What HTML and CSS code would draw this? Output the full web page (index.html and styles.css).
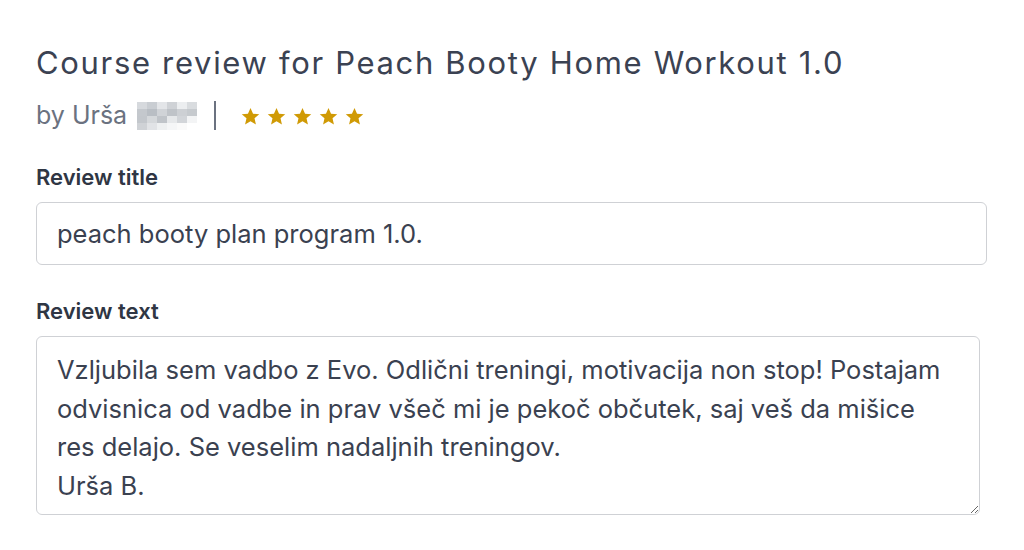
FILE: index.html
```html
<!DOCTYPE html>
<html lang="sl">
<head>
<meta charset="utf-8">
<title>Course review</title>
<link rel="stylesheet" href="styles.css">
</head>
<body>
<main class="review">
  <h1 class="review__title">Course review for Peach Booty Home Workout 1.0</h1>
  <div class="review__meta">
    <span class="review__author">by Urša</span>
    <span class="blur">
      <i style="background:#d6d9dd"></i><i style="background:#c9cdd2"></i><i style="background:#e3e5e8"></i><i style="background:#cfd2d6"></i><i style="background:#eceef0"></i><i style="background:#d9dcdf"></i>
      <i style="background:#c4c8cd"></i><i style="background:#b9bec4"></i><i style="background:#d0d3d7"></i><i style="background:#bfc3c8"></i><i style="background:#cdd0d4"></i><i style="background:#c6cace"></i>
      <i style="background:#c3c7cc"></i><i style="background:#d5d8db"></i><i style="background:#c0c4c9"></i><i style="background:#e6e8ea"></i><i style="background:#d2d5d9"></i><i style="background:#f3f4f5"></i>
      <i style="background:#cfd2d6"></i><i style="background:#e1e3e6"></i><i style="background:#eef0f1"></i><i style="background:#f5f6f7"></i><i style="background:#fafafa"></i><i style="background:#ffffff"></i>
    </span>
    <span class="divider"></span>
    <span class="stars">
      <svg viewBox="0 0 24 24"><path d="M12 2.2l2.9 6.6 7.1.6-5.4 4.7 1.6 7-6.2-3.7-6.2 3.7 1.6-7L2 9.4l7.1-.6z"/></svg>
      <svg viewBox="0 0 24 24"><path d="M12 2.2l2.9 6.6 7.1.6-5.4 4.7 1.6 7-6.2-3.7-6.2 3.7 1.6-7L2 9.4l7.1-.6z"/></svg>
      <svg viewBox="0 0 24 24"><path d="M12 2.2l2.9 6.6 7.1.6-5.4 4.7 1.6 7-6.2-3.7-6.2 3.7 1.6-7L2 9.4l7.1-.6z"/></svg>
      <svg viewBox="0 0 24 24"><path d="M12 2.2l2.9 6.6 7.1.6-5.4 4.7 1.6 7-6.2-3.7-6.2 3.7 1.6-7L2 9.4l7.1-.6z"/></svg>
      <svg viewBox="0 0 24 24"><path d="M12 2.2l2.9 6.6 7.1.6-5.4 4.7 1.6 7-6.2-3.7-6.2 3.7 1.6-7L2 9.4l7.1-.6z"/></svg>
    </span>
  </div>

  <label class="field__label" for="rtitle">Review title</label>
  <input class="field__input" id="rtitle" type="text" value="peach booty plan program 1.0.">

  <label class="field__label field__label--second" for="rtext">Review text</label>
  <textarea class="field__textarea" id="rtext">Vzljubila sem vadbo z Evo. Odlični treningi, motivacija non stop! Postajam odvisnica od vadbe in prav všeč mi je pekoč občutek, saj veš da mišice res delajo. Se veselim nadaljnih treningov.
Urša B.</textarea>
</main>
</body>
</html>
```

FILE: styles.css
```css
* { box-sizing: border-box; }
html, body { margin: 0; padding: 0; background: #ffffff; }
body {
  font-family: "Inter", "Liberation Sans", sans-serif;
  color: #3a4150;
}
.review {
  display: flex;
  flex-direction: column;
  align-items: flex-start;
  padding: 43px 0 0 36px;
  width: 1024px;
}
.review__title {
  margin: 0;
  font-family: "Inter", sans-serif;
  font-weight: 400;
  font-size: 31px;
  line-height: 40px;
  letter-spacing: 1.67px;
  color: #3b4252;
  white-space: nowrap;
}
.review__meta {
  display: flex;
  align-items: center;
  height: 32px;
  margin-top: 16px;
}
.review__author {
  font-size: 25px;
  color: #6b7280;
  line-height: 32px;
}
.blur {
  display: grid;
  grid-template-columns: repeat(6, 10px);
  grid-template-rows: repeat(4, 7px);
  margin-left: 10px;
  margin-top: 2px;
}
.blur i { display: block; }
.divider {
  width: 2px;
  height: 29px;
  background: #6b7280;
  margin-left: 17px;
}
.stars {
  display: flex;
  gap: 5px;
  margin-left: 24px;
  margin-top: 2px;
}
.stars svg {
  width: 21px;
  height: 21px;
  fill: #d09a05;
}
.field__label {
  display: block;
  margin-top: 34px;
  font-size: 22px;
  font-weight: 600;
  line-height: 24px;
  color: #2f3644;
}
.field__label--second { margin-top: 34px; }
.field__input,
.field__textarea {
  font-family: "Inter", "Liberation Sans", sans-serif;
  font-size: 25.5px;
  color: #3a4150;
  border: 1.5px solid #cfd1d5;
  border-radius: 6px;
  background: #fff;
  outline: none;
  margin: 0;
}
.field__input {
  width: 951px;
  height: 63px;
  margin-top: 13px;
  padding: 0 20px;
}
.field__textarea {
  width: 944px;
  height: 179px;
  margin-top: 13px;
  padding: 14px 20px;
  line-height: 38.6px;
  resize: vertical;
  overflow: hidden;
}
```
